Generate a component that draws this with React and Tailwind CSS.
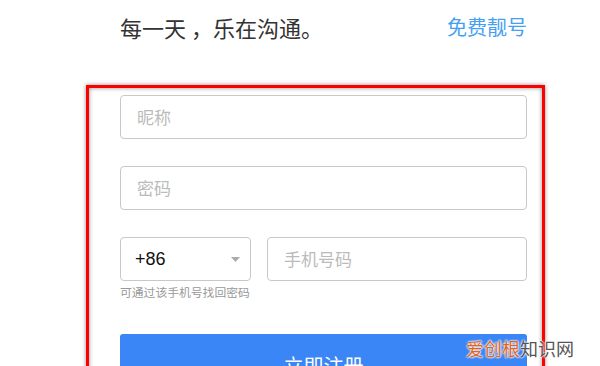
export default function App() {
  return (
    <div className="relative w-[600px] h-[366px] overflow-hidden bg-white font-['Noto_Sans_CJK_SC',sans-serif]">
      {/* header */}
      <div className="flex items-center justify-between pl-[120px] pr-[73px] pt-[11px] h-[42px]">
        <span className="text-[22px] leading-[30px] text-[#333] whitespace-nowrap">每一天 ，乐在沟通。</span>
        <span className="text-[20px] leading-[30px] text-[#44a0f2]">免费靓号</span>
      </div>

      {/* highlighted form */}
      <div className="ml-[86px] mt-[43px] w-[459px] h-[300px] border-[3px] border-[#ff0000] shadow-[0_0_4px_rgba(0,0,0,0.45),inset_0_0_4px_rgba(0,0,0,0.45)] pl-[31px] pr-[15px] pt-[7px]">
        <div className="flex h-[44px] items-center rounded-[4px] border border-[#c8c8c8] px-[16px] text-[17px] text-[#bbb]">
          昵称
        </div>
        <div className="mt-[27px] flex h-[44px] items-center rounded-[4px] border border-[#c8c8c8] px-[16px] text-[17px] text-[#bbb]">
          密码
        </div>
        <div className="mt-[27px] flex gap-[16px]">
          <div className="flex h-[44px] w-[131px] items-center justify-between rounded-[4px] border border-[#c8c8c8] pl-[14px] pr-[10px]">
            <span className="font-['Liberation_Sans',sans-serif] text-[18px] text-[#111]">+86</span>
            <svg width="9" height="5" viewBox="0 0 9 5">
              <path d="M0 0h9L4.5 5z" fill="#aaa" />
            </svg>
          </div>
          <div className="flex h-[44px] flex-1 items-center rounded-[4px] border border-[#c8c8c8] px-[16px] text-[17px] text-[#bbb]">
            手机号码
          </div>
        </div>
        <div className="mt-[4px] text-[11.8px] leading-[14px] text-[#999]">可通过该手机号找回密码</div>
        <div className="mt-[35px] flex h-[48px] items-center justify-center rounded-[3px] bg-[#3a86f6] pt-[16px] text-[20px] text-white">
          立即注册
        </div>
      </div>

      {/* watermark */}
      <div className="absolute left-[466px] top-[337px] text-[18px] leading-[22px] [text-shadow:0_0_2px_#fff,0_0_2px_#fff,0_0_2px_#fff]">
        <span className="text-[#e5641c]">爱创根</span>
        <span className="text-[#555]">知识网</span>
      </div>
    </div>
  )
}
